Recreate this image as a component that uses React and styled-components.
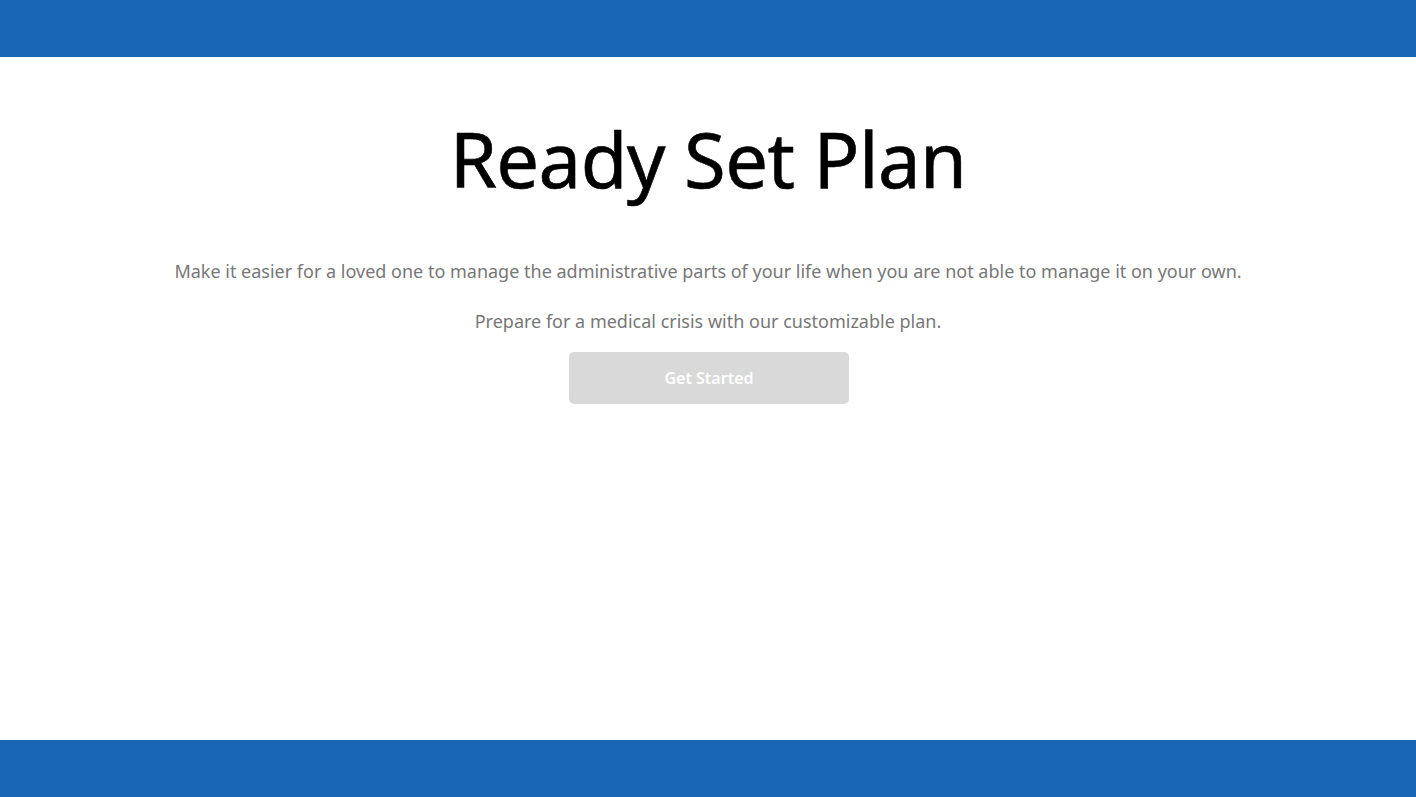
import React from 'react';
import styled, { createGlobalStyle } from 'styled-components';

const GlobalStyle = createGlobalStyle`
  html, body {
    margin: 0;
    padding: 0;
    background: #fff;
    font-family: "Noto Sans", "Open Sans", sans-serif;
  }
`;

const Page = styled.div`
  display: flex;
  flex-direction: column;
  min-height: 797px;
`;

const Bar = styled.div`
  height: 57px;
  background: #1866b4;
  flex-shrink: 0;
`;

const Main = styled.main`
  flex: 1;
  display: flex;
  flex-direction: column;
  align-items: center;
  padding-top: 63px;
`;

const Title = styled.h1`
  margin: 0;
  font-size: 76px;
  font-weight: 400;
  line-height: 77px;
  color: #000;
  letter-spacing: -0.6px;
  -webkit-text-stroke: 0.6px #000;
`;

const Text = styled.p`
  margin: ${(p) => p.top || 0}px 0 0;
  font-size: 18px;
  line-height: 24px;
  color: #777;
`;

const Button = styled.button`
  margin: 19px 0 0 2px;
  width: 280px;
  height: 52px;
  border: none;
  border-radius: 5px;
  background: #d9d9d9;
  color: #fff;
  font-family: inherit;
  font-size: 16px;
  font-weight: 600;
  cursor: pointer;
`;

export default function App() {
  return (
    <Page>
      <GlobalStyle />
      <Bar />
      <Main>
        <Title>Ready Set Plan</Title>
        <Text top={62}>
          Make it easier for a loved one to manage the administrative parts of your life when you are not able to manage it on your own.
        </Text>
        <Text top={26}>Prepare for a medical crisis with our customizable plan.</Text>
        <Button>Get Started</Button>
      </Main>
      <Bar />
    </Page>
  );
}
